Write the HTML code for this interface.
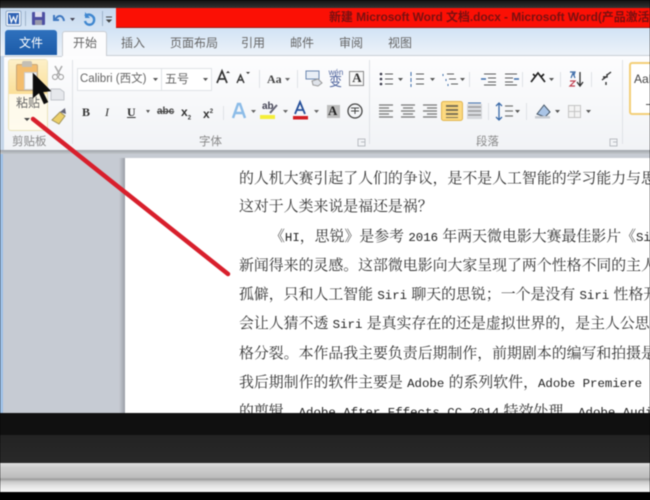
<!DOCTYPE html>
<html lang="zh"><head><meta charset="utf-8"><style>
html,body{margin:0;padding:0;width:650px;height:500px;overflow:hidden;background:#000}
#r{position:relative;width:650px;height:500px;overflow:hidden;filter:blur(.5px)}
.a{position:absolute}
.t{position:absolute;white-space:nowrap;font-family:"Liberation Sans","Noto Sans CJK SC",sans-serif}
.l{position:absolute;left:239px;white-space:nowrap;font:14.9px/20px "Noto Serif CJK SC",serif;color:#333;word-spacing:.5px}
.l i{font:12.4px/20px "Liberation Mono",monospace;font-style:normal;color:#222;word-spacing:0}
.tab{font-size:12px;color:#666;top:35px;line-height:16px}
.g{font-size:11.5px;color:#888;top:134px;line-height:16px}
.s{position:absolute;top:60px;width:1px;height:84px;background:#dfe2e6}
svg{position:absolute;left:0;top:0}
</style></head><body><div id="r">
<div class="a" style="left:0;top:0;width:650px;height:8px;background:linear-gradient(#121212,#333)"></div>
<div class="a" style="left:0;top:8px;width:116px;height:20px;background:linear-gradient(#c5d8ee,#d5e4f4)"></div>
<div class="a" style="left:116px;top:8px;width:534px;height:20px;background:#fb1005;border-bottom:1px solid #a81a10;box-sizing:border-box"></div>
<div class="t" style="left:329px;top:9px;font:12px/17px 'Liberation Sans','Noto Sans CJK SC',sans-serif;color:#7a1010;font-weight:bold;letter-spacing:-.08px">新建 Microsoft Word 文档.docx - Microsoft Word(产品激活</div>
<div class="a" style="left:0;top:28px;width:650px;height:28px;background:linear-gradient(#d2e3f5,#eef3f9)"></div>
<div class="a" style="left:5px;top:30px;width:52px;height:25px;background:linear-gradient(#2f71bd,#1c5ba8);border-radius:3px 3px 0 0"></div>
<div class="t" style="left:19px;top:35px;font-size:12px;line-height:16px;color:#fff">文件</div>
<div class="a" style="left:62px;top:31px;width:45px;height:26px;background:#fcfcfd;border:1px solid #c8ccd2;border-bottom:0;box-sizing:border-box;border-radius:3px 3px 0 0"></div>
<div class="t tab" style="left:73px">开始</div><div class="t tab" style="left:121px">插入</div>
<div class="t tab" style="left:170px">页面布局</div><div class="t tab" style="left:241px">引用</div>
<div class="t tab" style="left:290px">邮件</div><div class="t tab" style="left:339px">审阅</div><div class="t tab" style="left:388px">视图</div>

<div class="a" style="left:3px;top:56px;width:647px;height:95px;background:linear-gradient(#fdfdfe,#f1f3f6)"></div>
<div class="a" style="left:107px;top:55px;width:543px;height:1px;background:#c9ced5"></div>
<div class="a" style="left:3px;top:56px;width:59px;height:1px;background:#c9ced5"></div>
<div class="a" style="left:0;top:56px;width:4px;height:98px;background:#c5d6ea"></div>
<div class="a" style="left:0;top:150px;width:650px;height:4px;background:linear-gradient(#9ea3a9,#c3c7cc)"></div>
<div class="s" style="left:369px"></div><div class="s" style="left:622px"></div><div class="s" style="left:72px"></div>

<!-- paste button -->
<div class="a" style="left:8px;top:59px;width:40px;height:72px;border:1px solid #ebe2bb;box-sizing:border-box;border-radius:3px;background:linear-gradient(#fdf8e6,#fffbee)"></div>
<div class="a" style="left:9px;top:60px;width:38px;height:34px;background:linear-gradient(#fdf0c8,#fbdf98)"></div>
<div class="a" style="left:16px;top:64px;width:22px;height:27px;background:#f3bd6e;border:1px solid #c9a878;box-sizing:border-box;border-radius:2px"></div>
<div class="a" style="left:22px;top:61px;width:10px;height:6px;background:#c4bfb3;border-radius:2px 2px 0 0"></div>
<div class="a" style="left:24px;top:72px;width:13px;height:18px;background:#f8f8f8;border:1px solid #ccc;box-sizing:border-box"></div>
<div class="t" style="left:16px;top:96px;font-size:12px;line-height:14px;color:#666">粘贴</div>
<div class="t g" style="left:12px">剪贴板</div>
<svg width="650" height="500" viewBox="0 0 650 500">
<path d="M24 118h6l-3 3z" fill="#444"/>
<!-- small clipboard tools -->
<path d="M55 66l5 9M62 66l-5 9" stroke="#aaa" stroke-width="1.500" fill="none"/><circle cx="55" cy="77" r="2.500" fill="none" stroke="#999"/><circle cx="61" cy="77" r="2.500" fill="none" stroke="#999"/>
<path d="M51 89h9l4 3v8h-13z" fill="#e6e8ec" stroke="#c2c5ca"/>
<path d="M52 120l8-8 5 4-6 8z" fill="#eccf6a" stroke="#a3945a"/><path d="M60 112l5-4 1 6z" fill="#667"/>
<!-- QAT -->
<rect x="6" y="11" width="15" height="15" rx="1.500" fill="#f0f5fb" stroke="#8ea6c3"/><rect x="8" y="13" width="11" height="11" fill="#2f62b4"/>
<path d="M9.500 15l1.800 7 2.200-5 2.200 5 1.800-7" stroke="#fff" stroke-width="1.200" fill="none"/>
<rect x="25" y="11" width="1" height="15" fill="#9db2c9"/>
<rect x="32" y="12" width="13" height="13" rx="1" fill="#4d4fa2"/><rect x="35" y="12" width="7" height="5" fill="#dde"/><rect x="35" y="20" width="7" height="5" fill="#99a"/>
<path d="M54 15v5h5M55 20c3-6 8-5 9 1" stroke="#3f78c0" stroke-width="2" fill="none"/><path d="M70 18h5l-2.500 3z" fill="#445"/>
<path d="M85 16c3-3 10-1 9 5-1 5-8 5-9 0" stroke="#3f87d0" stroke-width="2.400" fill="none"/><path d="M85 12v6h5" fill="#3f87d0"/>
<rect x="102" y="11" width="1" height="15" fill="#9db2c9"/><path d="M106 17h6M107 20h4l-2 2z" stroke="#444" fill="#444"/>
<!-- arrow cursor -->
<path d="M33 73l0 25 6-5 5 11 4-2-5-10 8-1z" fill="#0d0d0d" stroke="#222" stroke-width=".5"/>
<!-- font combos -->
<rect x="77.500" y="68.500" width="134" height="22" fill="#fff" stroke="#dfe2e6"/><rect x="161" y="69" width="1" height="21" fill="#dfe2e6"/>
<path d="M153 78h5l-2.500 3zM203 78h5l-2.500 3z" fill="#555"/>
<!-- bold row bits -->
<path d="M146 110h4l-2 3z" fill="#555"/>
<!-- grow/shrink -->
<path d="M217 83l5-12 5 12M219 79h6" stroke="#333" stroke-width="1.700" fill="none"/><path d="M226 73l2-2 2 2z" fill="#333"/>
<path d="M237 83l3.500-8 3.500 8M238.500 80h4" stroke="#333" stroke-width="1.400" fill="none"/><path d="M246 72l2 2 2-2z" fill="#333"/>
<rect x="259" y="70" width="1" height="18" fill="#dfe2e6"/><rect x="297" y="70" width="1" height="18" fill="#dfe2e6"/><rect x="223" y="106" width="1" height="14" fill="#dfe2e6"/>
<path d="M285 78h5l-2.500 3z" fill="#666"/>
<!-- clear formatting / border -->
<rect x="306" y="71" width="13" height="8" fill="#e8eef6" stroke="#6b87b0"/><path d="M312 81l6-2 4 4-4 3-5-1z" fill="#dfe3ea" stroke="#999"/>
<rect x="349.500" y="71.500" width="14" height="14" fill="#f7f7f7" stroke="#888"/>
<!-- text effect row -->
<path d="M233 118l5-14h2l5 14M235 113h8" stroke="#8cbce8" stroke-width="2.500" fill="none"/>
<path d="M251 110h5l-2.500 3zM283 110h5l-2.500 3zM314 110h5l-2.500 3z" fill="#666"/>
<rect x="260" y="115" width="15" height="4" fill="#f4ee3a"/><path d="M270 113l7-8" stroke="#667" stroke-width="2"/>
<rect x="293" y="116" width="15" height="3.500" fill="#d21f24"/><path d="M295 114l5-12 5 12M297 110h6" stroke="#26509a" stroke-width="1.800" fill="none"/>
<rect x="327" y="105" width="13" height="13" fill="#bdbdbd"/><circle cx="355" cy="111" r="7" fill="none" stroke="#444" stroke-width="1.300"/><path d="M351 108h8M355 108v6M351 111h8" stroke="#444" fill="none"/>
<!-- list row -->
<g stroke="#5a5a5a" fill="none"><path d="M385 74h8M385 79h8M385 84h8M416 74h8M416 79h8M416 84h8M447 74h7M449 79h7M451 84h7"/></g>
<g fill="#334"><circle cx="381" cy="74" r="1.300"/><circle cx="381" cy="79" r="1.300"/><circle cx="381" cy="84" r="1.300"/></g>
<path d="M411 72v4M411 78v4M411 84v3M443 74v2M446 79v2M448 84v2" stroke="#3a6aa8"/>
<path d="M398 78h5l-2.500 3zM430 78h5l-2.500 3zM460 78h5l-2.500 3zM549 78h5l-2.500 3z" fill="#555"/>
<g stroke="#5a5a5a" fill="none"><path d="M484 74h12M488 78h8M488 82h8M484 85h12M505 74h12M505 78h8M505 82h8M505 85h12"/></g>
<path d="M481 79h5M514 79h5" stroke="#3a6aa8" stroke-width="1.500" fill="none"/>
<rect x="469" y="72" width="1" height="15" fill="#dfe2e6"/><rect x="522" y="72" width="1" height="15" fill="#dfe2e6"/><rect x="560" y="72" width="1" height="15" fill="#dfe2e6"/><rect x="591" y="72" width="1" height="15" fill="#dfe2e6"/>
<path d="M531 82l7-9 7 9M533 74l3 3M544 74l-3 3" stroke="#222" stroke-width="1.700" fill="none"/>
<path d="M570 72h5l-1 3M571 78l2-5 2 5" stroke="#3a6aa8" stroke-width="1.200" fill="none"/><path d="M570 81h5l-5 5h5" stroke="#c04050" stroke-width="1.200" fill="none"/><path d="M580 72v13M577 82l3 4 3-4" stroke="#333" stroke-width="1.300" fill="none"/>
<path d="M607 74v3h-4M606 82v3M602 80l4-3M611 72l-4 3" stroke="#333" stroke-width="1.400" fill="none"/>
<!-- align row -->
<g stroke="#777" stroke-width="1.300" fill="none"><path d="M379 105h14M379 108h10M379 111h14M379 114h10M379 117h14"/><path d="M401 105h14M403 108h10M401 111h14M403 114h10M401 117h14"/><path d="M423 105h14M427 108h10M423 111h14M427 114h10M423 117h14"/></g>
<rect x="441.500" y="101.500" width="21" height="19" rx="2" fill="#fcd97f" stroke="#e2b650"/>
<path d="M446 105h12v2h-12zM446 109h12v2h-12zM446 113h12v2h-12zM446 117h12v1h-12z" fill="#7d7355"/>
<path d="M467 104h15v15h-15z" fill="#d6d8dc"/><path d="M468 107h13M468 111h13M468 115h13" stroke="#888"/><path d="M468 103h13" stroke="#3a6aa8"/>
<rect x="488" y="103" width="1" height="17" fill="#dfe2e6"/><rect x="526" y="103" width="1" height="17" fill="#dfe2e6"/>
<path d="M499 104v15M496 106l3-3 3 3M496 117l3 3 3-3" stroke="#3a6aa8" stroke-width="1.300" fill="none"/><path d="M505 106h8M505 111h8M505 116h8" stroke="#777" stroke-width="1.300"/><path d="M515 110h5l-2.500 3z" fill="#555"/>
<path d="M537 114l7-9 6 7-5 5z" fill="#a9c4e6" stroke="#456"/><rect x="535" y="116" width="15" height="2.500" fill="#c8ccd2"/><path d="M555 110h5l-2.500 3zM586 110h5l-2.500 3z" fill="#555"/>
<rect x="568.500" y="105.500" width="12" height="12" fill="#f3f3f3" stroke="#c4c4c4"/><path d="M574.500 105v13M568 111.500h13" stroke="#c4c4c4"/>
<!-- launchers -->
<path d="M358 139h7v7h-7zM361 142h4v4" fill="none" stroke="#b8bcc1"/><path d="M610 139h7v7h-7zM613 142h4v4" fill="none" stroke="#b8bcc1"/>
</svg>
<div class="t" style="left:80px;top:71px;font-size:11.5px;line-height:16px;color:#666;width:72px;overflow:hidden">Calibri (西文)</div>
<div class="t" style="left:165px;top:71px;font-size:12px;line-height:16px;color:#666">五号</div>
<div class="t" style="left:267px;top:71px;font:bold 12px/16px 'Liberation Serif',serif;color:#444">Aa</div>
<div class="t" style="left:328px;top:69px;font:8px/8px 'Liberation Sans',sans-serif;color:#4a5f9a;width:16px;text-align:center">wén</div>
<div class="t" style="left:329px;top:74px;font:13px/14px 'Noto Sans CJK SC',sans-serif;color:#4a5f9a">变</div>
<div class="t" style="left:350px;top:70px;font:bold 13px/16px 'Liberation Serif',serif;color:#333;width:14px;text-align:center">A</div>
<div class="t" style="left:82px;top:104px;font:bold 12px/16px 'Liberation Serif',serif;color:#333">B</div>
<div class="t" style="left:105px;top:104px;font:italic 12px/16px 'Liberation Serif',serif;color:#333">I</div>
<div class="t" style="left:127px;top:104px;font:bold 12px/16px 'Liberation Serif',serif;color:#333;text-decoration:underline">U</div>
<div class="t" style="left:157px;top:105px;font:bold 10px/14px 'Liberation Sans',sans-serif;color:#444;text-decoration:line-through">abc</div>
<div class="t" style="left:181px;top:104px;font:bold 12px/16px 'Liberation Sans',sans-serif;color:#333">x<sub style="font-size:6px">2</sub></div>
<div class="t" style="left:203px;top:104px;font:bold 12px/16px 'Liberation Sans',sans-serif;color:#333">x<sup style="font-size:6px">2</sup></div>
<div class="t" style="left:262px;top:101px;font:bold 10px/12px 'Liberation Sans',sans-serif;color:#445">ab</div>
<div class="t" style="left:328px;top:104px;font:bold 13px/14px 'Liberation Serif',serif;color:#222">A</div>
<div class="t g" style="left:199px">字体</div>
<div class="t g" style="left:476px">段落</div>
<div class="a" style="left:629px;top:62px;width:30px;height:53px;border:2px solid #f3cf78;box-sizing:border-box;border-radius:3px;background:#fff"></div>
<div class="t" style="left:634px;top:71px;font-size:12px;line-height:16px;color:#444">AaI</div>
<div class="a" style="left:646px;top:104px;width:4px;height:1px;background:#555"></div>

<!-- workspace -->
<div class="a" style="left:0;top:154px;width:650px;height:260px;background:#c6cbd3"></div>
<div class="a" style="left:0;top:154px;width:3px;height:260px;background:#9dc0e6"></div>
<div class="a" style="left:119px;top:158px;width:6px;height:256px;background:linear-gradient(90deg,#c6cbd3,#9a9ea6)"></div>
<div class="a" style="left:125px;top:158px;width:525px;height:256px;background:#fff;overflow:hidden">
</div>
<div class="a" style="left:0;top:0;width:650px;height:413px;overflow:hidden">
<div class="l" style="top:168px">的人机大赛引起了人们的争议，是不是人工智能的学习能力与思</div>
<div class="l" style="top:196px">这对于人类来说是福还是祸？</div>
<div class="l" style="top:226px;left:270px">《<i>HI</i>，思锐》是参考 <i>2016</i> 年两天微电影大赛最佳影片《<i>Si</i></div>
<div class="l" style="top:255px">新闻得来的灵感。这部微电影向大家呈现了两个性格不同的主人</div>
<div class="l" style="top:284px">孤僻，只和人工智能 <i>Siri</i> 聊天的思锐；一个是没有 <i>Siri</i> 性格开</div>
<div class="l" style="top:313px">会让人猜不透 <i>Siri</i> 是真实存在的还是虚拟世界的，是主人公思</div>
<div class="l" style="top:343px">格分裂。本作品我主要负责后期制作，前期剧本的编写和拍摄是</div>
<div class="l" style="top:372px">我后期制作的软件主要是 <i>Adobe</i> 的系列软件，<i>Adobe Premiere P</i></div>
<div class="l" style="top:401px">的剪辑，<i>Adobe After Effects CC 2014</i> 特效处理，<i>Adobe Audi</i></div>
</div>
<!-- red annotation line -->
<svg width="650" height="500" viewBox="0 0 650 500"><path d="M33 119L228 274" stroke="#d81f2c" stroke-width="4.500" stroke-linecap="round"/></svg>

<!-- bottom bezel -->
<div class="a" style="left:0;top:413px;width:650px;height:22px;background:#101010"></div>
<div class="a" style="left:0;top:435px;width:650px;height:28px;background:linear-gradient(#232323,#292929)"></div>
<div class="a" style="left:0;top:463px;width:650px;height:29px;background:linear-gradient(#e0e0e0 0,#cfcfcf 15%,#bdbdbd 50%,#9a9a9a 56%,#c8c8c8 64%,#e4e4e4 80%,#f8f8f8 100%)"></div>
<div class="a" style="left:0;top:492px;width:650px;height:8px;background:#000"></div>
</div></body></html>
